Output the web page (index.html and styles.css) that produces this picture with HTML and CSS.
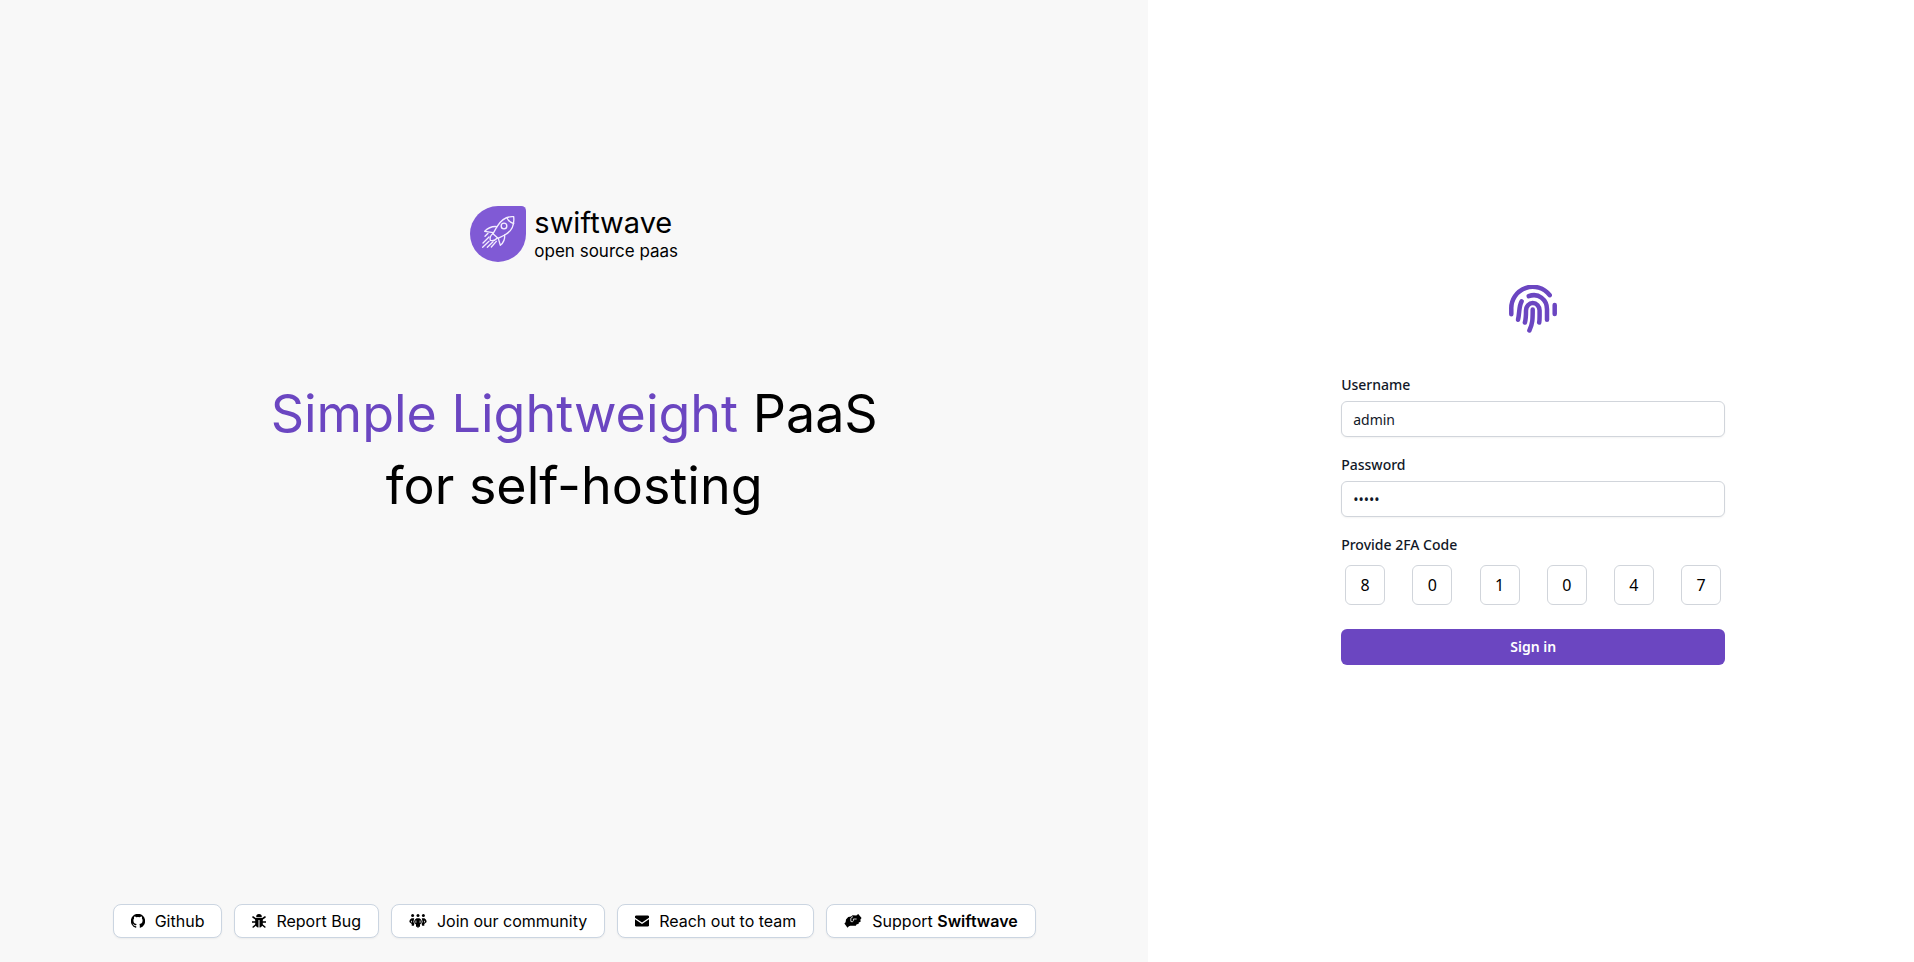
FILE: index.html
```html
<!DOCTYPE html>
<html lang="en">
<head>
<meta charset="utf-8">
<meta name="viewport" content="width=device-width, initial-scale=1">
<title>SwiftWave - Sign in</title>
<link rel="stylesheet" href="styles.css">
</head>
<body>
<div class="page">
  <section class="intro">
    <div class="intro-main">
      <div class="brand">
        <svg class="brand-logo" viewBox="18 18 168 168" aria-hidden="true">
          <path fill="#805ad5" d="M102 18h70a14 14 0 0 1 14 14v70a84 84 0 1 1-84-84z"/>
          <g fill="none" stroke="#f3edff" stroke-width="4" stroke-linecap="round" stroke-linejoin="round">
            <path d="M149 50C128 48 111 60 99 80L87 101l15 14 20-10C143 94 152 76 149 50z"/>
            <path d="M129 54c4 9 10 14 20 17"/>
            <circle cx="120" cy="78" r="8.500"/>
            <path d="M99 80c-15-2-27 4-37 14l26 4M122 105c1 12-3 23-13 31l-6-21"/>
            <path d="M86 101c-7 6-9 13-7 20 8 2 15 0 21-7"/>
            <path d="M72 100l-9 9M75 111l-18 18M75 124l-19 18M87 125l-17 17M97 124l-15 17"/>
          </g>
        </svg>
        <div class="brand-text">
          <span class="brand-name">swiftwave</span>
          <span class="brand-tagline">open source paas</span>
        </div>
      </div>
      <h1 class="headline"><span class="accent">Simple Lightweight</span> PaaS<br>for self-hosting</h1>
    </div>
    <nav class="links" aria-label="Project links">
      <a class="link" href="#github">
        <svg class="icon" viewBox="1 1 14 14" aria-hidden="true"><path d="M8 .8a7.200 7.200 0 0 0-2.300 14c.4.1.5-.2.500-.4v-1.300c-2 .4-2.500-.9-2.500-.9-.3-.8-.8-1-.8-1-.7-.5 0-.5 0-.5.700.1 1.100.8 1.100.8.700 1.100 1.700.8 2.200.6 0-.5.3-.8.500-1-1.600-.2-3.300-.8-3.300-3.600 0-.8.3-1.400.700-1.900 0-.2-.3-1 .1-2 0 0 .600-.2 2 .7a7 7 0 0 1 3.600 0c1.400-.9 2-.7 2-.7.4 1 .1 1.800.1 2 .4.500.700 1.100.700 1.900 0 2.800-1.700 3.400-3.300 3.600.3.200.500.7.500 1.300v2c0 .2.100.5.500.4A7.200 7.200 0 0 0 8 .8z"/></svg>
        <span>Github</span>
      </a>
      <a class="link" href="#issues">
        <svg class="icon" viewBox="1 1 14 14" aria-hidden="true"><path d="M5.200 3.900a2.800 2.800 0 0 1 5.600 0v.4H5.200zM4.200 5h7.600v5.500c0 2.200-1.400 3.800-3.300 4.100V7h-1v7.600c-1.900-.3-3.300-1.900-3.300-4.100z"/><path d="M2 4l3 2.200M14 4l-3 2.200M1.500 9h3M14.500 9h-3M2.200 14l3-2.500M13.800 14l-3-2.500" fill="none" stroke="currentColor" stroke-width="1.600" stroke-linecap="round"/></svg>
        <span>Report Bug</span>
      </a>
      <a class="link" href="#community">
        <svg class="icon icon-wide" viewBox="0 1 18 14" aria-hidden="true"><circle cx="3.600" cy="2.600" r="1.500"/><circle cx="9" cy="2.600" r="1.500"/><circle cx="14.400" cy="2.600" r="1.500"/><path d="M2.600 5.200h2.600L4.400 9l1 1.800-.6 1.900H2.700V11L.4 9c0-1.700.8-3 2.200-3.800zM15.400 5.200h-2.600l.8 3.800-1 1.800.6 1.900h2.100V11l2.300-2c0-1.700-.8-3-2.200-3.800zM7.600 5.200h2.800c1.500.7 2.400 2 2.400 3.500 0 1-.7 2-1.800 2.700v2.300H9.600v1H8.400v-1H7v-2.300C5.900 10.700 5.200 9.700 5.200 8.700c0-1.500.9-2.800 2.400-3.500z"/><path d="M6.900 7.500v2.300M11.100 7.500v2.300M2.500 7.800v1.600M15.500 7.800v1.600" stroke="#fff" stroke-width=".8"/></svg>
        <span>Join our community</span>
      </a>
      <a class="link" href="#contact">
        <svg class="icon" viewBox="1 1 14 14" aria-hidden="true"><path d="M2.200 2.600h11.600A1.400 1.400 0 0 1 15.200 4v.6L8 9.600.8 4.600V4a1.400 1.400 0 0 1 1.400-1.400zM.8 6.100 8 11l7.200-4.900V12a1.400 1.400 0 0 1-1.400 1.400H2.200A1.400 1.400 0 0 1 .8 12z"/></svg>
        <span>Reach out to team</span>
      </a>
      <a class="link" href="#support">
        <svg class="icon icon-wide" viewBox="0 1 18 14" aria-hidden="true"><path d="M14.200 1l3.400 4-1.200 1.500.2 2.200-1.800.8-.3 1.500-1.800.3-.9 1.500H6.400l-1.500.5-1.400 1.500L.4 10.600l1.200-1.400.4-2.600 2.200-2.700 3-.4 1.300-1.200 3.800.1z"/><path d="M9 3.600L6.800 5.200v3.200l1.500.5 1.100-1.100V6h3.200" fill="none" stroke="#fff" stroke-width=".8"/></svg>
        <span>Support <strong>Swiftwave</strong></span>
      </a>
    </nav>
  </section>
  <main class="auth">
    <form class="form">
      <svg class="fingerprint" viewBox="0 0 48 48" fill="none" stroke="#6b46c1" stroke-width="4.500" stroke-linecap="round" aria-hidden="true">
        <path d="M2.300 29.300V24A21.400 21.400 0 0 1 40.700 10.200"/>
        <path d="M45.700 20v9"/>
        <path d="M19.700 11.200C29.500 7.500 38 14.500 38 24.300v10.500"/>
        <path d="M12.700 16.300C9.800 21 10.700 27.500 9 34.800"/>
        <path d="M15.900 37.500C17 34 17 29.500 17 25.500a6.800 7.500 0 0 1 13.600 0V31c0 2.800 0 4.200-.4 6.500"/>
        <path d="M23.700 24.500c0 9.500 0 14-3.300 21"/>
      </svg>
      <div class="field">
        <label for="username">Username</label>
        <input class="text-input" id="username" type="text" value="admin" autocomplete="off">
      </div>
      <div class="field">
        <label for="password">Password</label>
        <input class="text-input" id="password" type="password" value="admin" autocomplete="off">
      </div>
      <fieldset class="field code">
        <legend>Provide 2FA Code</legend>
        <div class="code-row">
          <input class="digit" type="text" maxlength="1" value="8" aria-label="Digit 1">
          <input class="digit" type="text" maxlength="1" value="0" aria-label="Digit 2">
          <input class="digit" type="text" maxlength="1" value="1" aria-label="Digit 3">
          <input class="digit" type="text" maxlength="1" value="0" aria-label="Digit 4">
          <input class="digit" type="text" maxlength="1" value="4" aria-label="Digit 5">
          <input class="digit" type="text" maxlength="1" value="7" aria-label="Digit 6">
        </div>
      </fieldset>
      <button class="submit" type="button">Sign in</button>
    </form>
  </main>
</div>
</body>
</html>
```
FILE: styles.css
```css
* { box-sizing: border-box; }

body {
  margin: 0;
  background: #fff;
  color: #000;
  font-family: "Noto Sans", sans-serif;
}

.page {
  display: grid;
  grid-template-columns: 3fr 2fr;
  min-height: 100vh;
}

.intro {
  display: flex;
  flex-direction: column;
  align-items: center;
  padding: 24px;
  background: #f8f8f8;
  font-family: Inter, sans-serif;
}

.intro-main {
  flex: 1;
  display: flex;
  flex-direction: column;
  align-items: center;
  justify-content: center;
  gap: 116px;
  padding-bottom: 200px;
}

.brand {
  display: flex;
  align-items: center;
  gap: 8px;
}

.brand-logo { width: 56px; height: 56px; }

.brand-text {
  display: flex;
  flex-direction: column;
}

.brand-name { font-size: 29px; line-height: 34px; }
.brand-tagline { font-size: 17px; line-height: 22px; }

.headline {
  margin: 0;
  font-size: 52px;
  font-weight: 400;
  line-height: 72px;
  text-align: center;
}

.accent { color: #6b46c1; }

.links {
  display: flex;
  flex-wrap: wrap;
  justify-content: center;
  gap: 12px;
}

.link {
  display: flex;
  align-items: center;
  gap: 10px;
  padding: 4px 17px;
  border: 1px solid #cbd5e1;
  border-radius: 8px;
  background: #fff;
  box-shadow: 0 1px 2px rgb(0 0 0 / 5%);
  color: #000;
  font-size: 16px;
  line-height: 24px;
  text-decoration: none;
}

.link strong { font-weight: 600; }

.icon { width: 14px; height: 14px; fill: currentColor; }
.icon-wide { width: 18px; }

.auth {
  display: flex;
  align-items: center;
  justify-content: center;
  padding: 24px 24px 24px 28px;
}

.form {
  display: flex;
  flex-direction: column;
  gap: 16px;
  width: 100%;
  max-width: 384px;
  padding-bottom: 12px;
}

.fingerprint {
  align-self: center;
  width: 48px;
  height: 48px;
  margin-bottom: 24px;
}

.field {
  display: flex;
  flex-direction: column;
  gap: 4px;
}

label, legend {
  padding: 0;
  color: #111827;
  font-size: 14px;
  font-weight: 500;
  line-height: 24px;
}

.text-input {
  height: 36px;
  padding: 0 11px;
  border: 1px solid #d1d5db;
  border-radius: 6px;
  box-shadow: 0 1px 2px rgb(0 0 0 / 5%);
  color: #111827;
  font: 14px/20px "Noto Sans", sans-serif;
}

.code {
  margin: 0;
  padding: 0;
  border: 0;
}

.code-row {
  display: flex;
  justify-content: space-between;
  padding: 8px 4px 0;
}

.digit {
  width: 40px;
  height: 40px;
  padding: 0;
  border: 1px solid #d1d5db;
  border-radius: 6px;
  color: #000;
  font: 16px/24px "Noto Sans", sans-serif;
  text-align: center;
}

.submit {
  height: 36px;
  margin-top: 8px;
  border: 0;
  border-radius: 6px;
  background: #6b46c1;
  color: #fff;
  font: 600 14px/20px "Noto Sans", sans-serif;
}
```
